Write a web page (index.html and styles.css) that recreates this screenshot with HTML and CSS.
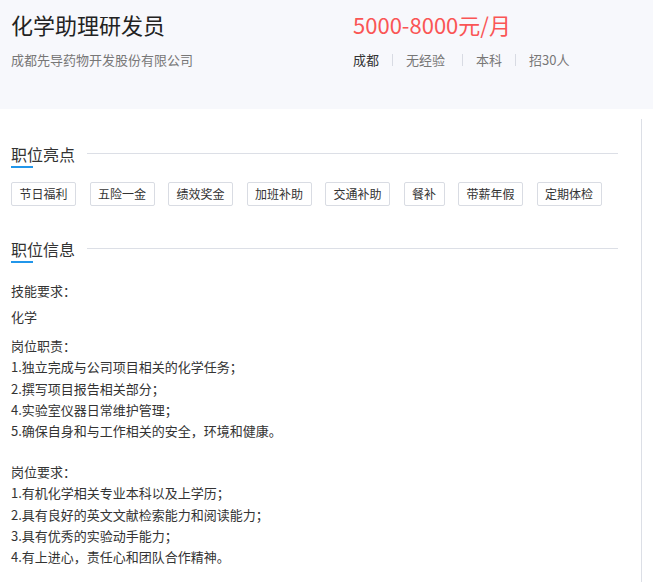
FILE: index.html
```html
<!DOCTYPE html>
<html lang="zh-CN">
<head>
<meta charset="utf-8">
<title>化学助理研发员</title>
<link rel="stylesheet" href="styles.css">
</head>
<body>
<header class="job-header">
  <div class="hd-left">
    <h1 class="job-title">化学助理研发员</h1>
    <div class="company">成都先导药物开发股份有限公司</div>
  </div>
  <div class="hd-right">
    <div class="salary">5000-8000元/月</div>
    <div class="meta">
      <span class="meta-item city">成都</span><span class="sep"></span><span class="meta-item exp">无经验</span><span class="sep"></span><span class="meta-item">本科</span><span class="sep"></span><span class="meta-item">招30人</span>
    </div>
  </div>
</header>
<main class="main-col">
  <section class="section">
    <div class="sec-head">
      <div class="sec-title-wrap"><h2 class="sec-title">职位亮点</h2><div class="sec-bar"></div></div>
      <div class="sec-line"></div>
    </div>
    <div class="tags">
      <span class="tag">节日福利</span>
      <span class="tag">五险一金</span>
      <span class="tag">绩效奖金</span>
      <span class="tag">加班补助</span>
      <span class="tag">交通补助</span>
      <span class="tag">餐补</span>
      <span class="tag">带薪年假</span>
      <span class="tag">定期体检</span>
    </div>
  </section>
  <section class="section section-info">
    <div class="sec-head">
      <div class="sec-title-wrap"><h2 class="sec-title">职位信息</h2><div class="sec-bar"></div></div>
      <div class="sec-line"></div>
    </div>
    <div class="desc">
      <p class="p-skill">技能要求：</p>
      <p class="p-skill-val">化学</p>
      <p class="p-body">岗位职责：<br>1.独立完成与公司项目相关的化学任务；<br>2.撰写项目报告相关部分；<br>4.实验室仪器日常维护管理；<br>5.确保自身和与工作相关的安全，环境和健康。</p>
      <p class="p-body p-gap">岗位要求：<br>1.有机化学相关专业本科以及上学历；<br>2.具有良好的英文文献检索能力和阅读能力；<br>3.具有优秀的实验动手能力；<br>4.有上进心，责任心和团队合作精神。</p>
    </div>
  </section>
</main>
</body>
</html>
```

FILE: styles.css
```css
* { box-sizing: border-box; }
html, body { margin: 0; padding: 0; background: #fff; }
body {
  font-family: "Noto Sans CJK SC", "Noto Sans", sans-serif;
  color: #333;
  width: 653px;
  overflow: hidden;
}
.job-header {
  background: #f7f8fc;
  height: 109px;
  display: flex;
  padding: 8px 0 0 11px;
}
.hd-left { width: 342px; }
.job-title {
  margin: 0;
  font-size: 22px;
  line-height: 32px;
  font-weight: normal;
  color: #222;
}
.company {
  margin-top: 11px;
  font-size: 13px;
  line-height: 18px;
  color: #777;
}
.salary {
  font-size: 22px;
  line-height: 32px;
  color: #fa5555;
}
.meta {
  margin-top: 11px;
  display: flex;
  align-items: center;
  font-size: 13px;
  line-height: 18px;
  color: #777;
}
.meta .city { color: #333; }
.meta .exp { margin-right: 4px; }
.sep {
  width: 1px;
  height: 12px;
  background: #d8dbe3;
  margin: 0 13px;
}
.main-col {
  margin-top: 10px;
  width: 642px;
  border-right: 1px solid #dcdfe6;
  padding: 25px 23px 40px 11px;
}
.sec-head {
  display: flex;
  align-items: flex-start;
}
.sec-title {
  margin: 0;
  font-size: 16px;
  line-height: 20px;
  font-weight: normal;
  color: #333;
}
.sec-bar {
  width: 22px;
  height: 2px;
  background: #2196ea;
  margin-top: 2px;
}
.sec-line {
  flex: 1;
  height: 1px;
  background: #dcdfe6;
  margin-top: 9px;
  margin-left: 12px;
}
.tags {
  display: flex;
  gap: 13.5px;
  margin-top: 14px;
}
.tag {
  height: 24px;
  line-height: 22px;
  padding: 0 7.5px;
  border: 1px solid #d9dce3;
  border-radius: 2px;
  font-size: 12px;
  color: #333;
  background: #fff;
  white-space: nowrap;
}
.section-info { margin-top: 33px; }
.desc {
  margin-top: 17px;
  font-size: 13px;
  line-height: 22px;
  color: #333;
}
.desc p { margin: 0; }
.desc .p-skill { margin-bottom: 4px; }
.desc .p-skill-val { margin-bottom: 7px; }
.desc .p-body { line-height: 21.3px; }
.desc .p-gap { margin-top: 19.5px; }
```
